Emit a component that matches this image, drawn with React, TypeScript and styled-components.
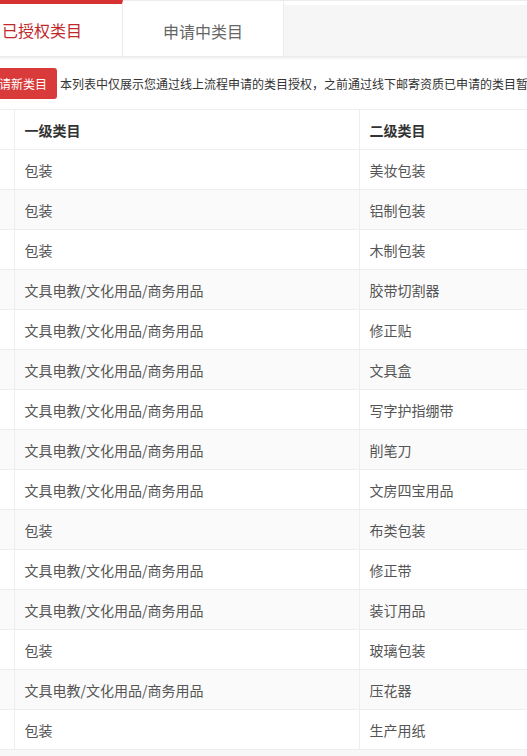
import styled, {createGlobalStyle} from 'styled-components';

const GlobalStyle = createGlobalStyle`
  html, body {
    margin: 0;
    padding: 0;
    background: #fff;
    overflow: hidden;
    font-family: "Noto Sans CJK SC", "Noto Sans", sans-serif;
  }
`;

interface TabProps {
  active?: boolean;
}

interface RowProps {
  striped?: boolean;
}

const rows: [string, string][] = [
  ['包装', '美妆包装'],
  ['包装', '铝制包装'],
  ['包装', '木制包装'],
  ['文具电教/文化用品/商务用品', '胶带切割器'],
  ['文具电教/文化用品/商务用品', '修正贴'],
  ['文具电教/文化用品/商务用品', '文具盒'],
  ['文具电教/文化用品/商务用品', '写字护指绷带'],
  ['文具电教/文化用品/商务用品', '削笔刀'],
  ['文具电教/文化用品/商务用品', '文房四宝用品'],
  ['包装', '布类包装'],
  ['文具电教/文化用品/商务用品', '修正带'],
  ['文具电教/文化用品/商务用品', '装订用品'],
  ['包装', '玻璃包装'],
  ['文具电教/文化用品/商务用品', '压花器'],
  ['包装', '生产用纸'],
];

const Page = styled.div`
  margin-left: -38px;
  width: 980px;
`;

const TabBar = styled.div`
  display: flex;
  height: 55px;
  border-top: 1px solid #ececec;
  border-bottom: 1px solid #ececec;
  background: linear-gradient(#fff 0 4px, #f6f6f6 4px);
`;

const Tab = styled.div<TabProps>`
  width: 161px;
  box-sizing: border-box;
  display: flex;
  align-items: center;
  justify-content: center;
  background: #fff;
  margin-top: ${p => (p.active ? '-1px' : '0')};
  border-top: ${p => (p.active ? '4px solid #d63232' : '0')};
  border-right: 1px solid #ececec;
  padding-top: ${p => (p.active ? '0' : '4px')};
  font-size: 16px;
  color: ${p => (p.active ? '#c0282b' : '#666')};
`;

const Divider = styled.div`
  height: 2px;
  background: #f4f4f4;
`;

const Notice = styled.div`
  display: flex;
  align-items: center;
  gap: 3px;
  padding: 9px 0 10px 15px;
  white-space: nowrap;
`;

const ApplyButton = styled.button`
  height: 31px;
  padding: 0 10px;
  border: 0;
  border-radius: 3px;
  background: #d93a3a;
  color: #fff;
  font-family: inherit;
  font-size: 12px;
`;

const NoticeText = styled.span`
  font-size: 12px;
  color: #333;
`;

const Table = styled.table`
  width: 100%;
  border-collapse: collapse;
  table-layout: fixed;
  border-top: 1px solid #eee;
`;

const Row = styled.tr<RowProps>`
  height: 40px;
  background: ${p => (p.striped ? '#fafafa' : '#fff')};
  border-bottom: 1px solid #eee;
`;

const HeadCell = styled.th`
  text-align: left;
  padding: 0 10px;
  font-size: 14px;
  font-weight: 600;
  color: #333;
  border-right: 1px solid #eee;
`;

const Cell = styled.td`
  padding: 0 10px;
  font-size: 14px;
  color: #555;
  border-right: 1px solid #eee;
`;

const Footer = styled.div`
  height: 40px;
  background: #f7f7f7;
`;

export default function App() {
  return (
    <Page>
      <GlobalStyle />
      <TabBar>
        <Tab active>已授权类目</Tab>
        <Tab>申请中类目</Tab>
      </TabBar>
      <Divider />
      <Notice>
        <ApplyButton>申请新类目</ApplyButton>
        <NoticeText>
          本列表中仅展示您通过线上流程申请的类目授权，之前通过线下邮寄资质已申请的类目暂不在此展示
        </NoticeText>
      </Notice>
      <Table>
        <colgroup>
          <col style={{width: 52}} />
          <col style={{width: 345}} />
          <col />
        </colgroup>
        <thead>
          <Row>
            <HeadCell />
            <HeadCell>一级类目</HeadCell>
            <HeadCell>二级类目</HeadCell>
          </Row>
        </thead>
        <tbody>
          {rows.map(([first, second], i) => (
            <Row key={i} striped={i % 2 === 1}>
              <Cell />
              <Cell>{first}</Cell>
              <Cell>{second}</Cell>
            </Row>
          ))}
        </tbody>
      </Table>
      <Footer />
    </Page>
  );
}
